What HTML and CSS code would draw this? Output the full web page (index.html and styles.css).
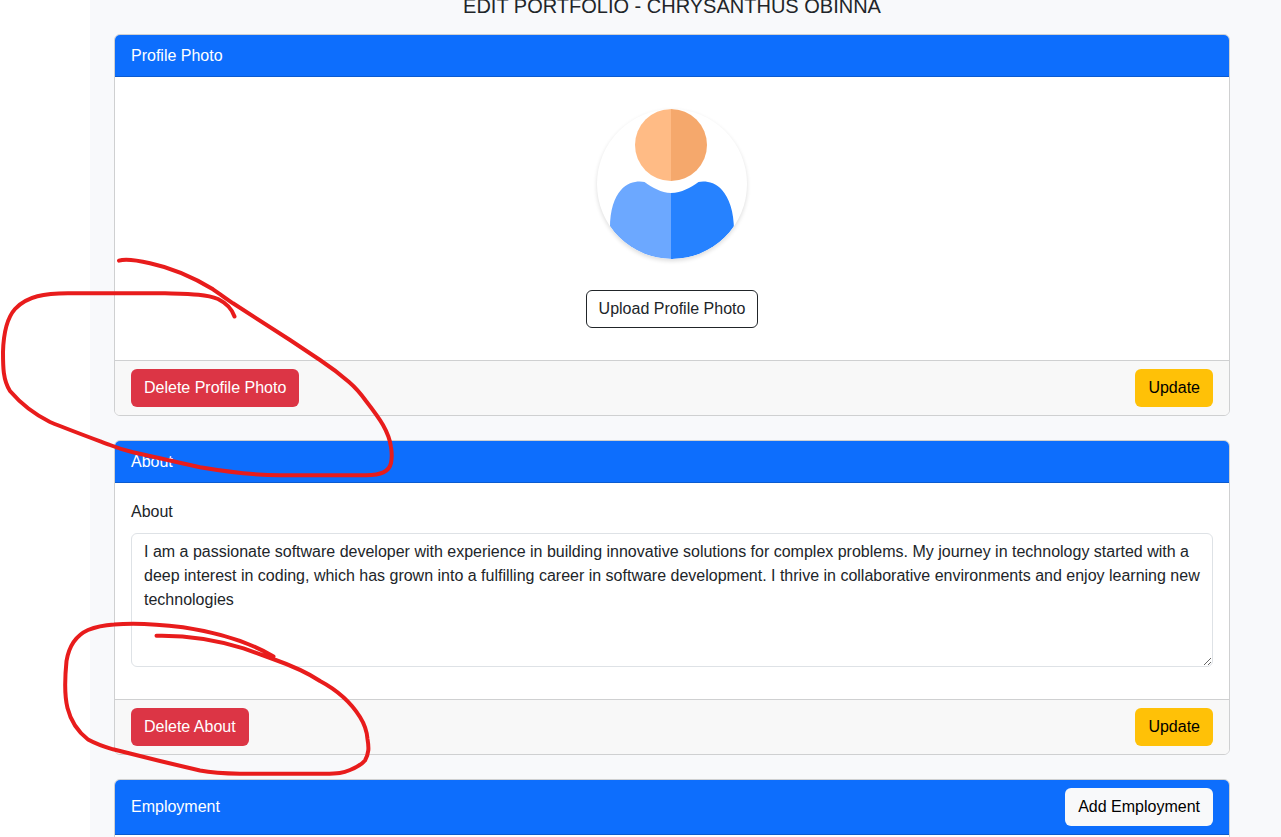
FILE: index.html
```html
<!DOCTYPE html>
<html lang="en">
<head>
<meta charset="utf-8">
<meta name="viewport" content="width=device-width, initial-scale=1">
<title>Edit Portfolio</title>
<link rel="stylesheet" href="styles.css">
</head>
<body>
<div class="shell">
  <main class="content">
    <h1 class="page-title">EDIT PORTFOLIO - CHRYSANTHUS OBINNA</h1>

    <section class="card">
      <h2 class="card-header">Profile Photo</h2>
      <div class="card-body photo-body">
        <svg class="avatar" viewBox="0 0 150 150" role="img" aria-label="Profile photo">
          <clipPath id="round"><circle cx="75" cy="75" r="75"/></clipPath>
          <path d="M74 0A36 36 0 0 0 74 72Z" fill="#ffbb85"/>
          <path d="M74 0A36 36 0 0 1 74 72Z" fill="#f5a86c"/>
          <g clip-path="url(#round)">
            <path d="M74 84C64 83.500 56 79 47.500 73C42 71.500 31 72.500 24 81C17 89 12.500 102 13 122V150H74Z" fill="#6ca8ff"/>
            <path d="M74 84C85 83.500 93 79 101.500 73C107 71.500 118 72.500 125 81C132 89 137 102 137 122V150H74Z" fill="#2682ff"/>
          </g>
        </svg>
        <button class="btn btn-outline" type="button">Upload Profile Photo</button>
      </div>
      <div class="card-footer">
        <button class="btn btn-danger" type="button">Delete Profile Photo</button>
        <button class="btn btn-warning" type="button">Update</button>
      </div>
    </section>

    <section class="card">
      <h2 class="card-header">About</h2>
      <div class="card-body about-body">
        <label class="label" for="about">About</label>
        <textarea class="textarea" id="about" rows="5">I am a passionate software developer with experience in building innovative solutions for complex problems. My journey in technology started with a deep interest in coding, which has grown into a fulfilling career in software development. I thrive in collaborative environments and enjoy learning new technologies</textarea>
      </div>
      <div class="card-footer">
        <button class="btn btn-danger" type="button">Delete About</button>
        <button class="btn btn-warning" type="button">Update</button>
      </div>
    </section>

    <section class="card">
      <div class="card-header card-header-actions">
        <h2 class="card-title">Employment</h2>
        <button class="btn btn-light" type="button">Add Employment</button>
      </div>
      <div class="card-body about-body"></div>
    </section>
  </main>

  <svg class="ink" width="400" height="800" aria-hidden="true">
    <path d="M119 260.700C126 258.500 140 261 150 263.300C172 268 196 279 213 289.300C220 294 226 298.500 233 303.300L290 340L320 360C332 368 341 375 349 382C356 388 361 394 366 401C373 410 379 418 383 425C387 432 390 440 391 447C392 453 392 458 391 463C389 472 381 475 366 475.300H280C252 475.300 228 472 200 467.300L133 452.300Q120 449 110 445C94 439 72 431 50 422C34 414 22 405 10 391C3 380 3 367 3 352C3.500 334 7 318 15 309C27 296 45 293.300 68 293.300H165C190 294 206 294 218 299C226 303 232 309 234.500 316.500"/>
    <path d="M156.500 635.700C190 635 220 641 243.500 648.300L273 659C290 665 308 673 320 681C335 689 350 701 360 717C365 725 367 732 367.500 739C369 748 369 753 365 760.500C361 765 355 768 350 770C343 773 338 773.700 325 773.700H240C225 773.500 213 773 200 770.500L160 761L113 749.300Q98 745 88 739.500C77 731 71 722 67.500 708C64.500 696 65 676 66.500 661C69 646 77 635 88 630Q99 625.500 114 624.500C140 622 165 625 183 627.300C214 632 246 640 273.500 656.500"/>
  </svg>
</div>
</body>
</html>
```

FILE: styles.css
```css
* {
  box-sizing: border-box;
}

body {
  margin: 0;
  background: #fff;
  color: #212529;
  font: 16px/24px "Liberation Sans", Arial, sans-serif;
}

.shell {
  position: relative;
  height: 100vh;
  padding-left: 90px;
  overflow: hidden;
}

.content {
  display: flex;
  flex-direction: column;
  gap: 24px;
  min-height: 100%;
  padding: 0 51px 24px 24px;
  background: #f8f9fb;
}

.page-title {
  margin: -6px 0 -8px;
  font-size: 20px;
  font-weight: 400;
  line-height: 24px;
  text-align: center;
}

.card {
  border: 1px solid #cfd0d1;
  border-radius: 6px;
  background: #fff;
}

.card-header {
  margin: 0;
  padding: 9px 16px 8px;
  border-bottom: 1px solid #0b5bd0;
  border-radius: 5px 5px 0 0;
  background: #0d6efd;
  color: #fff;
  font-size: 16px;
  font-weight: 400;
  line-height: 24px;
}

.card-header-actions {
  display: flex;
  align-items: center;
  justify-content: space-between;
  padding-top: 8px;
}

.card-title {
  margin: 0;
  font-size: 16px;
  font-weight: 400;
}

.photo-body {
  display: flex;
  flex-direction: column;
  align-items: center;
  gap: 31px;
  padding: 32px 16px;
}

.avatar {
  width: 150px;
  height: 150px;
  border-radius: 50%;
  box-shadow: 0 2px 4px rgba(0, 0, 0, 0.14);
}

.about-body {
  display: flex;
  flex-direction: column;
  gap: 9px;
  padding: 17px 16px 32px;
}

.textarea {
  width: 100%;
  padding: 6px 12px;
  border: 1px solid #dee2e6;
  border-radius: 6px;
  background: #fff;
  color: #212529;
  font: inherit;
  resize: vertical;
}

.card-footer {
  display: flex;
  justify-content: space-between;
  padding: 8px 16px;
  border-top: 1px solid #cfd0d1;
  border-radius: 0 0 5px 5px;
  background: #f8f8f8;
}

.btn {
  padding: 6px 12px;
  border: 1px solid transparent;
  border-radius: 6px;
  font: inherit;
  cursor: pointer;
}

.btn-outline {
  border-color: #212529;
  background: #fff;
  color: #212529;
}

.btn-danger {
  background: #dc3545;
  color: #fff;
}

.btn-warning {
  background: #ffc107;
  color: #000;
}

.btn-light {
  background: #f8f9fa;
  color: #000;
}

.ink {
  position: absolute;
  top: 0;
  left: 0;
  fill: none;
  stroke: #e81c1c;
  stroke-width: 4;
  stroke-linecap: round;
  stroke-linejoin: round;
  pointer-events: none;
}
```
